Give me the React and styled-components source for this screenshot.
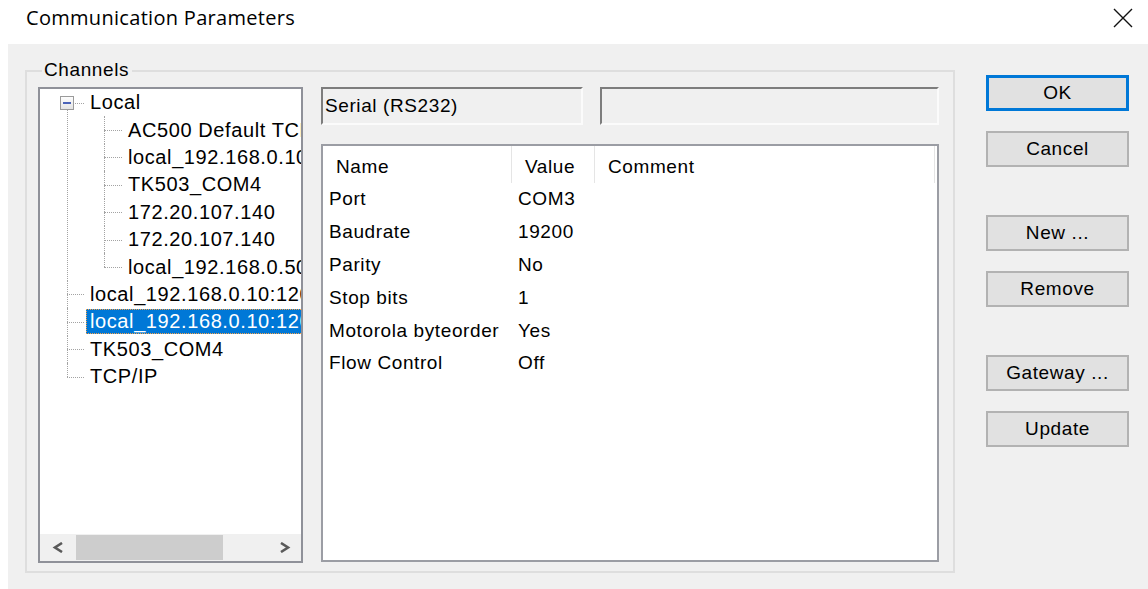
import React from 'react'
import styled, { createGlobalStyle, css } from 'styled-components'

const GlobalStyle = createGlobalStyle`
  html, body {
    margin: 0;
    padding: 0;
    background: #fff;
  }
  body {
    font-family: 'Liberation Sans', Arial, sans-serif;
    font-size: 19px;
    letter-spacing: 0.6px;
    color: #000;
  }
  ul {
    list-style: none;
    margin: 0;
    padding: 0;
  }
`

const ROW = 27.4
const MID = ROW / 2

const Window = styled.div`
  width: 1148px;
  height: 589px;
  display: flex;
  flex-direction: column;
  background: #fff;
  overflow: hidden;
`

const TitleBar = styled.div`
  height: 44px;
  flex-shrink: 0;
  display: flex;
  justify-content: space-between;
  align-items: flex-start;
  padding: 0 15px 0 26px;
`

const Title = styled.div`
  font-family: 'Open Sans', 'Liberation Sans', sans-serif;
  font-size: 20px;
  letter-spacing: 0.3px;
  line-height: 24px;
  margin-top: 6px;
`

const CloseIcon = styled.svg`
  margin-top: 8px;
`

const Body = styled.div`
  flex: 1;
  margin-left: 8px;
  background: #f0f0f0;
  display: flex;
  align-items: flex-start;
  padding: 26px 0 0 17px;
`

const GroupBox = styled.div`
  position: relative;
  box-sizing: border-box;
  width: 930px;
  height: 503px;
  border: 2px solid #dedede;
  padding: 15px 14px 0 11px;
  display: flex;
  gap: 18px;
`

const GroupLabel = styled.span`
  position: absolute;
  top: -13px;
  left: 15px;
  padding: 0 3px 0 2px;
  background: #f0f0f0;
  line-height: 22px;
`

const TreeBox = styled.div`
  box-sizing: border-box;
  width: 265px;
  height: 476px;
  border: 2px solid #8f9199;
  background: #fff;
  display: flex;
  flex-direction: column;
`

const TreeBody = styled.div`
  flex: 1;
  overflow: hidden;
  white-space: nowrap;
  font-size: 20px;
`

const Node = styled.li`
  position: relative;

  &::before {
    content: '';
    position: absolute;
    left: ${p => p.$lineX}px;
    top: ${MID}px;
    width: ${p => p.$textX - 6 - p.$lineX}px;
    border-top: 1px dotted #a3a3a3;
  }

  &::after {
    content: '';
    position: absolute;
    left: ${p => p.$lineX}px;
    top: ${p => (p.$first ? MID : 0)}px;
    border-left: 1px dotted #a3a3a3;
    ${p =>
      p.$last
        ? css`height: ${MID}px;`
        : css`bottom: 0;`}
  }
`

const Row = styled.div`
  position: relative;
  height: ${ROW}px;
  display: flex;
  align-items: center;
  padding-left: ${p => p.$textX - 4}px;
`

const Label = styled.span`
  position: relative;
  z-index: 1;
  height: 25px;
  line-height: 25px;
  padding: 0 4px;
  ${p =>
    p.$selected &&
    css`
      background: #0078d7;
      color: #fff;
      outline: 1px dotted #f7a34a;
      outline-offset: -1px;
    `}
`

const Expander = styled.span`
  position: absolute;
  z-index: 1;
  left: 20px;
  top: ${MID - 7}px;
  box-sizing: border-box;
  width: 14px;
  height: 14px;
  border: 1px solid #9a9a9a;
  background: linear-gradient(#fdfdfd, #e4e4e4);
  display: flex;
  align-items: center;
  justify-content: center;

  &::after {
    content: '';
    width: 8px;
    height: 2px;
    background: #4a63b8;
  }
`

const HScroll = styled.div`
  height: 27px;
  flex-shrink: 0;
  display: flex;
  background: #f0f0f0;
`

const ArrowButton = styled.div`
  width: ${p => p.$width}px;
  display: flex;
  align-items: center;
  justify-content: center;
`

const Thumb = styled.div`
  width: 147px;
  margin: 1px 0;
  background: #cdcdcd;
`

const Track = styled.div`
  flex: 1;
`

const RightPanel = styled.div`
  width: 618px;
  display: flex;
  flex-direction: column;
  gap: 19px;
`

const FieldRow = styled.div`
  display: flex;
  gap: 17px;
  height: 38px;
`

const Field = styled.div`
  box-sizing: border-box;
  ${p => (p.$width ? css`width: ${p.$width}px;` : css`flex: 1;`)}
  border: 2px solid;
  border-color: #7d7d7d #fbfbfb #fbfbfb #7d7d7d;
  background: #f0f0f0;
  display: flex;
  align-items: center;
  padding-left: 2px;
`

const ListView = styled.div`
  box-sizing: border-box;
  height: 418px;
  border: 2px solid #9b9da4;
  background: #fff;
`

const columns = '189px 83px 340px'

const HeaderRow = styled.div`
  display: grid;
  grid-template-columns: ${columns};
  height: 37px;
`

const HeaderCell = styled.div`
  display: flex;
  align-items: center;
  padding: 4px 0 0 13px;
  border-right: 1px solid #e5e5e5;
`

const DataRow = styled.div`
  display: grid;
  grid-template-columns: ${columns};
  height: 32.8px;
  align-items: center;
`

const Cell = styled.div`
  padding-left: 6px;
  white-space: nowrap;
`

const ButtonColumn = styled.div`
  display: flex;
  flex-direction: column;
  gap: 48px;
  margin-left: 31px;
  padding-top: 5px;
  width: 143px;
`

const ButtonGroup = styled.div`
  display: flex;
  flex-direction: column;
  gap: 20px;
`

const Button = styled.button`
  box-sizing: border-box;
  height: 36px;
  width: 100%;
  font: inherit;
  letter-spacing: inherit;
  color: #000;
  background: #e1e1e1;
  border: 2px solid #b2b2b2;
  padding: 0;

  ${p =>
    p.$default &&
    css`
      border: 3px solid #0078d7;
    `}
`

const channels = [
  {
    label: 'Local',
    open: true,
    children: [
      'AC500 Default TCP/IP',
      'local_192.168.0.10:1200',
      'TK503_COM4',
      '172.20.107.140',
      '172.20.107.140',
      'local_192.168.0.50:1200',
    ],
  },
  { label: 'local_192.168.0.10:1200' },
  { label: 'local_192.168.0.10:1201', selected: true },
  { label: 'TK503_COM4' },
  { label: 'TCP/IP' },
]

const params = [
  ['Port', 'COM3'],
  ['Baudrate', '19200'],
  ['Parity', 'No'],
  ['Stop bits', '1'],
  ['Motorola byteorder', 'Yes'],
  ['Flow Control', 'Off'],
]

const Chevron = ({ dir }) => (
  <svg width="13" height="11" viewBox="0 0 13 11">
    <polyline
      points={dir === 'left' ? '10,1 3,5.5 10,10' : '3,1 10,5.5 3,10'}
      fill="none"
      stroke="#5a5a5a"
      strokeWidth="2.6"
    />
  </svg>
)

const ChannelTree = () => (
  <TreeBox>
    <TreeBody>
      <ul>
        {channels.map((item, i) => (
          <Node
            key={i}
            $lineX={27}
            $textX={50}
            $first={i === 0}
            $last={i === channels.length - 1}
          >
            <Row $textX={50}>
              {item.open && <Expander />}
              <Label $selected={item.selected}>{item.label}</Label>
            </Row>
            {item.children && (
              <ul>
                {item.children.map((child, j) => (
                  <Node
                    key={j}
                    $lineX={64}
                    $textX={88}
                    $last={j === item.children.length - 1}
                  >
                    <Row $textX={88}>
                      <Label>{child}</Label>
                    </Row>
                  </Node>
                ))}
              </ul>
            )}
          </Node>
        ))}
      </ul>
    </TreeBody>
    <HScroll>
      <ArrowButton $width={36}>
        <Chevron dir="left" />
      </ArrowButton>
      <Thumb />
      <Track />
      <ArrowButton $width={34}>
        <Chevron dir="right" />
      </ArrowButton>
    </HScroll>
  </TreeBox>
)

const ParameterList = () => (
  <ListView>
    <HeaderRow>
      <HeaderCell>Name</HeaderCell>
      <HeaderCell>Value</HeaderCell>
      <HeaderCell>Comment</HeaderCell>
    </HeaderRow>
    {params.map(([name, value]) => (
      <DataRow key={name}>
        <Cell>{name}</Cell>
        <Cell>{value}</Cell>
        <Cell />
      </DataRow>
    ))}
  </ListView>
)

export default function App() {
  return (
    <>
      <GlobalStyle />
      <Window>
        <TitleBar>
          <Title>Communication Parameters</Title>
          <CloseIcon width="20" height="20" viewBox="0 0 20 20">
            <path d="M1 1 L19 19 M19 1 L1 19" stroke="#111" strokeWidth="1.4" />
          </CloseIcon>
        </TitleBar>
        <Body>
          <GroupBox>
            <GroupLabel>Channels</GroupLabel>
            <ChannelTree />
            <RightPanel>
              <FieldRow>
                <Field $width={262}>Serial (RS232)</Field>
                <Field />
              </FieldRow>
              <ParameterList />
            </RightPanel>
          </GroupBox>
          <ButtonColumn>
            <ButtonGroup>
              <Button $default>OK</Button>
              <Button>Cancel</Button>
            </ButtonGroup>
            <ButtonGroup>
              <Button>New ...</Button>
              <Button>Remove</Button>
            </ButtonGroup>
            <ButtonGroup>
              <Button>Gateway ...</Button>
              <Button>Update</Button>
            </ButtonGroup>
          </ButtonColumn>
        </Body>
      </Window>
    </>
  )
}
